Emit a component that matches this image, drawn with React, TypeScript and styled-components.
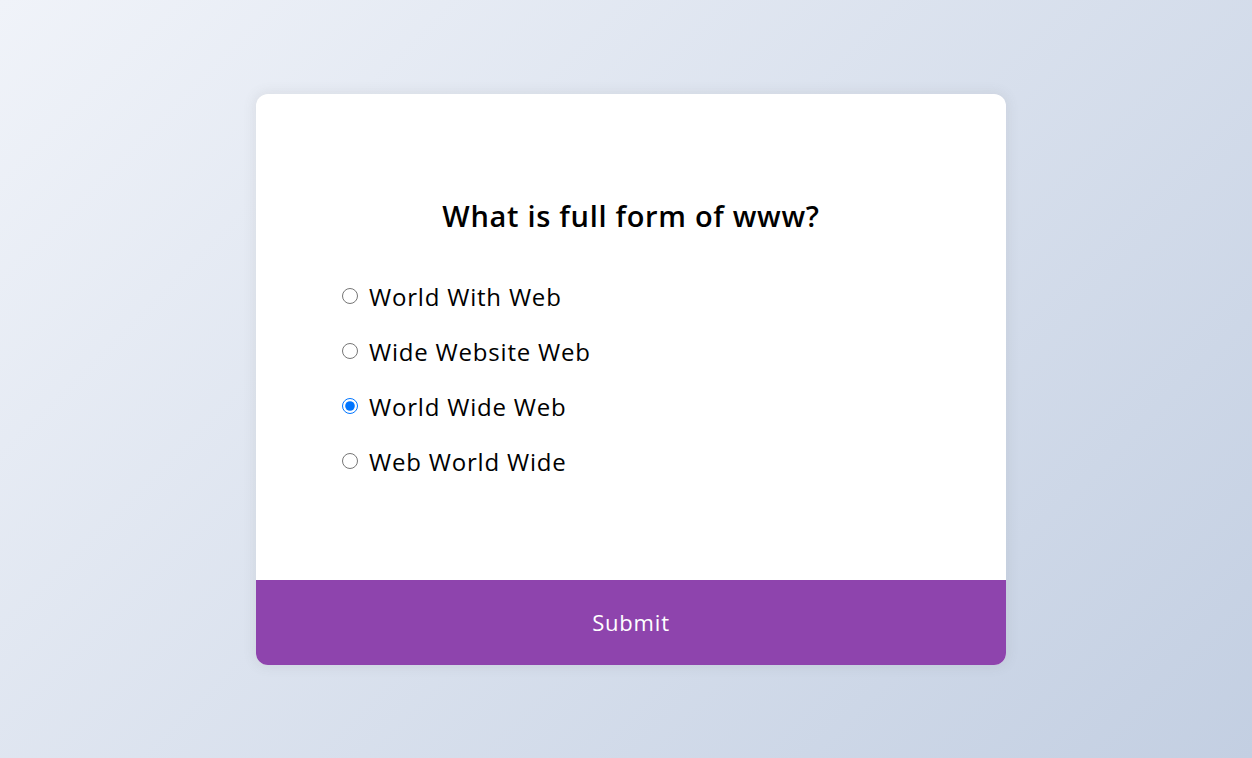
import React, { useState } from "react";
import styled, { createGlobalStyle } from "styled-components";

const GlobalStyle = createGlobalStyle`
  * {
    box-sizing: border-box;
  }
  html, body {
    margin: 0;
    padding: 0;
  }
  body {
    font-family: "Open Sans", "Liberation Sans", sans-serif;
    background-color: #c3cfe2;
    background-image: linear-gradient(135deg, #f0f3f9 0%, #c3cfe2 100%);
    min-height: 100vh;
  }
`;

const questions = ["World With Web", "Wide Website Web", "World Wide Web", "Web World Wide"];

function App() {
  const [selected, setSelected] = useState(2);

  return (
    <Page>
      <GlobalStyle />
      <Quiz>
        <Header>
          <Title>What is full form of www?</Title>
          <Options>
            {questions.map((q, i) => (
              <Option key={q}>
                <Radio
                  type="radio"
                  name="answer"
                  id={"a" + i}
                  checked={selected === i}
                  onChange={() => setSelected(i)}
                />
                <Label htmlFor={"a" + i}>{q}</Label>
              </Option>
            ))}
          </Options>
        </Header>
        <SubmitButton>Submit</SubmitButton>
      </Quiz>
    </Page>
  );
}

export default App;

const Page = styled.div`
  height: 100vh;
  display: flex;
  align-items: center;
  justify-content: center;
  padding-left: 10px;
`;

const Quiz = styled.div`
  width: 750px;
  background: #fff;
  border-radius: 12px;
  box-shadow: 0 0 12px 2px rgba(100, 100, 100, 0.1);
  overflow: hidden;
`;

const Header = styled.div`
  padding: 80px 80px 81px;
`;

const Title = styled.h2`
  margin: 0;
  padding: 19px 20px 21px;
  text-align: center;
  font-size: 29px;
  font-weight: 600;
  line-height: 45px;
  color: #000;
  letter-spacing: 0.7px;
`;

const Options = styled.ul`
  list-style: none;
  margin: 0;
  padding: 0;
`;

const Option = styled.li`
  display: flex;
  align-items: center;
  margin: 20px 0;
  height: 35px;
  font-size: 24px;
`;

const Radio = styled.input`
  width: 16px;
  height: 16px;
  margin: 0 11px 0 6px;
  accent-color: #0075ff;
`;

const Label = styled.label`
  color: #000;
  cursor: pointer;
  letter-spacing: 0.8px;
`;

const SubmitButton = styled.button`
  display: block;
  width: 100%;
  border: none;
  background-color: #8e44ad;
  color: #fff;
  font-family: inherit;
  font-size: 22px;
  letter-spacing: 0.8px;
  height: 85px;
  cursor: pointer;
  &:hover {
    background-color: #732d91;
  }
`;
